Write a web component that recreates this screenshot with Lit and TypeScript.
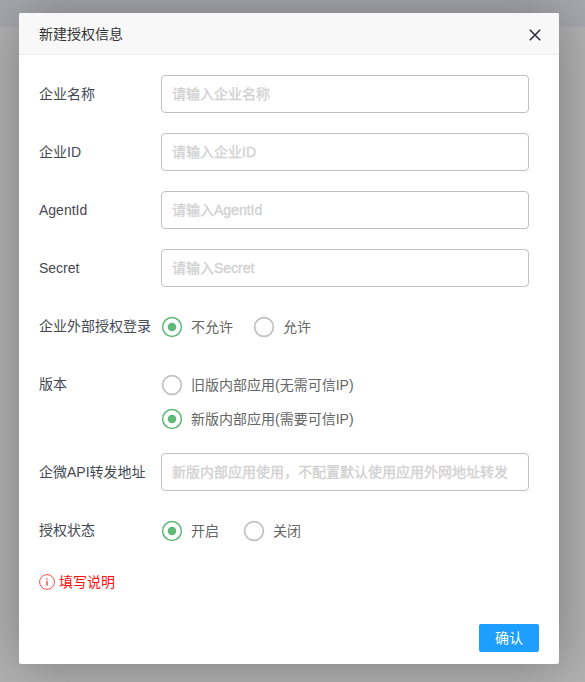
import { LitElement, html, css, svg } from "lit";
import { customElement, property } from "lit/decorators.js";

const FONT = css`"Liberation Sans", "Noto Sans CJK SC", sans-serif`;

@customElement("radio-option")
class RadioOption extends LitElement {
  @property() label = "";
  @property({ type: Boolean }) checked = false;

  static styles = css`
    :host {
      display: flex;
      align-items: center;
      height: 34px;
      color: #666;
      font: 14px/34px ${FONT};
    }
    .mark {
      display: block;
      width: 22px;
      height: 22px;
      margin-right: 8px;
      fill: none;
      stroke: #c2c2c2;
      stroke-width: 1.7;
    }
    .mark.on {
      stroke: #5fb878;
      stroke-width: 1.5;
    }
    .dot {
      fill: #5fb878;
      stroke: none;
    }
    .text {
      height: 34px;
      margin-top: -1px;
    }
  `;

  render() {
    return html`
      <svg class="mark ${this.checked ? "on" : ""}" viewBox="0 0 22 22">
        <circle cx="11" cy="11" r="9.4"></circle>
        ${this.checked ? svg`<circle class="dot" cx="11" cy="11" r="4.3"></circle>` : null}
      </svg>
      <span class="text">${this.label}</span>
    `;
  }
}

@customElement("app-root")
class AppRoot extends LitElement {
  static styles = css`
    :host {
      display: block;
      box-sizing: border-box;
      height: 682px;
      padding: 13px 26px 18px 19px;
      overflow: hidden;
      background: linear-gradient(#a6a8ad 27px, #b1b1b1 27px);
      font: 14px/20px ${FONT};
      color: #444953;
    }
    .dialog {
      display: flex;
      flex-direction: column;
      height: 651px;
      background: #fff;
      border-radius: 2px;
      box-shadow: 1px 1px 50px rgba(0, 0, 0, 0.3);
    }
    .header {
      display: flex;
      align-items: center;
      justify-content: space-between;
      box-sizing: border-box;
      height: 42px;
      padding: 0 18px 0 20px;
      background: #f8f8f8;
      border-bottom: 1px solid #eee;
      border-radius: 2px 2px 0 0;
      color: #333;
    }
    .close {
      width: 12px;
      height: 12px;
      margin-top: 3px;
      stroke: #2e2d3c;
      stroke-width: 1.6;
    }
    .form {
      display: flex;
      flex-direction: column;
      gap: 20px;
      padding: 20px 30px 0 20px;
    }
    .row {
      display: grid;
      grid-template-columns: 122px 1fr;
      min-height: 38px;
    }
    .label {
      line-height: 38px;
      white-space: nowrap;
    }
    .input {
      box-sizing: border-box;
      width: 100%;
      height: 38px;
      padding: 0 10px;
      border: 1px solid #c0c0c4;
      border-radius: 4px;
      background: #fff;
      outline: none;
      font: inherit;
    }
    .input::placeholder {
      color: #d2d2d2;
      opacity: 1;
      -webkit-text-stroke: 0.35px #d2d2d2;
    }
    .options {
      display: flex;
      gap: 20px;
      padding-top: 3px;
    }
    .options.wide {
      gap: 24px;
    }
    .options.stacked {
      flex-direction: column;
      gap: 0;
      margin-bottom: -3px;
    }
    .note {
      display: flex;
      align-items: center;
      gap: 4px;
      height: 26px;
      color: #ff1010;
    }
    .info {
      width: 16px;
      height: 16px;
      fill: none;
      stroke: #ff2020;
      stroke-width: 0.8;
    }
    .footer {
      display: flex;
      justify-content: flex-end;
      margin-top: auto;
      padding: 0 20px 12px;
    }
    .confirm {
      width: 60px;
      height: 28px;
      padding: 0;
      border: 0;
      border-radius: 2px;
      background: #1e9fff;
      color: #fff;
      font: 14px/28px ${FONT};
    }
  `;

  private field(label: string, placeholder: string) {
    return html`<div class="row">
      <label class="label">${label}</label>
      <input class="input" placeholder=${placeholder} />
    </div>`;
  }

  private choice(label: string, options: string[], selected: number, layout = "") {
    return html`<div class="row">
      <span class="label">${label}</span>
      <div class="options ${layout}">
        ${options.map(
          (o, i) => html`<radio-option .label=${o} .checked=${i === selected}></radio-option>`
        )}
      </div>
    </div>`;
  }

  render() {
    return html`
      <section class="dialog">
        <header class="header">
          <span>新建授权信息</span>
          <svg class="close" viewBox="0 0 12 12"><path d="M.8 .8 11.2 11.2M11.2 .8 .8 11.2" /></svg>
        </header>
        <div class="form">
          ${this.field("企业名称", "请输入企业名称")}
          ${this.field("企业ID", "请输入企业ID")}
          ${this.field("AgentId", "请输入AgentId")}
          ${this.field("Secret", "请输入Secret")}
          ${this.choice("企业外部授权登录", ["不允许", "允许"], 0)}
          ${this.choice("版本", ["旧版内部应用(无需可信IP)", "新版内部应用(需要可信IP)"], 1, "stacked")}
          ${this.field("企微API转发地址", "新版内部应用使用，不配置默认使用应用外网地址转发")}
          ${this.choice("授权状态", ["开启", "关闭"], 0, "wide")}
          <div class="note">
            <svg class="info" viewBox="0 0 16 16">
              <circle cx="8" cy="8" r="7.4" />
              <path d="M8 4.2v1.3M8 6.8v5" stroke-width="1.2" />
            </svg>
            <span>填写说明</span>
          </div>
        </div>
        <footer class="footer"><button class="confirm">确认</button></footer>
      </section>
    `;
  }
}
